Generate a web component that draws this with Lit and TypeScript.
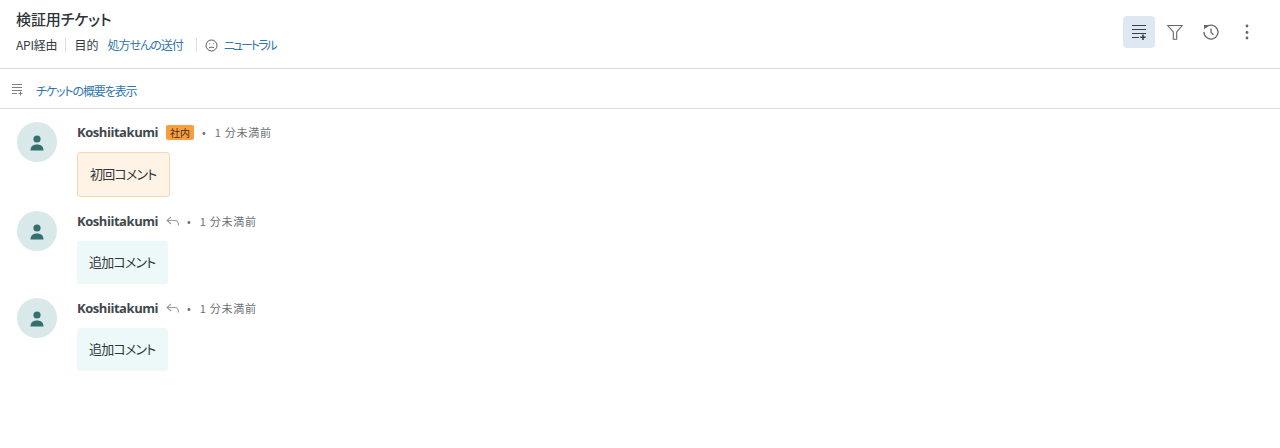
import { LitElement, html, css } from "lit";
import { customElement } from "lit/decorators.js";

const toolbarList = html`<svg width="20" height="18" viewBox="0 0 20 18" fill="none" stroke="currentColor" stroke-width="1.2"><path d="M3 2.500h14M3 6.500h14M3 10.500h14M3 14.500h7"/><path stroke-width="1.600" d="M14 11.500v5.500M11.300 14.200h5.400"/></svg>`;
const summaryList = html`<svg width="12" height="12" viewBox="0 0 12 12" fill="none" stroke="currentColor" stroke-width="1"><path d="M0 .5h10M0 3.500h10M0 6.500h10M0 9.500h5M8.500 7.500v4M6.500 9.500h4"/></svg>`;

@customElement("app-root")
export class AppRoot extends LitElement {
  static styles = css`
    :host { display: block; width: 1280px; height: 448px; background: #fff; overflow: hidden;
      font-family: "Noto Sans CJK JP", sans-serif; font-feature-settings: "palt"; color: #33393f; }
    .head { height: 69px; box-sizing: border-box; border-bottom: 1px solid #dcdcdc; padding: 10px 17px 0 16px; display: flex; justify-content: space-between; }
    .title { font-size: 15px; font-weight: 500; line-height: 18px; color: #2d3338; letter-spacing: -0.1px; }
    .meta { display: flex; align-items: center; font-size: 12px; line-height: 16px; margin-top: 9px; }
    .api { letter-spacing: -0.2px; }
    .sep { width: 1px; height: 14px; background: #dedede; margin: 0 8px; }
    .sep.wide { margin-left: 13px; }
    .link { color: #2f76ad; }
    .purpose { margin-left: 9px; letter-spacing: -1px; }
    .neutral { letter-spacing: -2px; }
    .mood { margin: 0 6px 0 0; display: block; color: #555; }
    .tools { display: flex; gap: 4px; padding-top: 6px; }
    .tool { width: 32px; height: 32px; border-radius: 4px; display: flex; align-items: center; justify-content: center; color: #62686e; }
    .tool.on { background: #dde8f3; color: #37424c; }
    .summary { height: 40px; box-sizing: border-box; border-bottom: 1px solid #dedede; padding: 14px 12px 0; display: flex; align-items: flex-start; font-size: 12px; line-height: 16px; }
    .summary svg { color: #808080; margin-right: 12px; display: block; margin-top: 1px; }
    .summary .link { letter-spacing: -1.1px; }
    .items { padding: 13px 17px 0; }
    .item { display: flex; gap: 20px; margin-bottom: 14px; }
    .avatar { width: 40px; height: 40px; border-radius: 50%; background: #d9e9e9; display: flex; align-items: center; justify-content: center; flex: none; color: #33706f; }
    .avatar svg { margin-top: 2px; }
    .line { display: flex; align-items: center; height: 20px; font-size: 11px; color: #6b7075; }
    .name { font-family: "Open Sans", sans-serif; font-weight: 700; font-size: 13px; color: #41474d; margin-right: 8px; letter-spacing: -0.45px; }
    .badge { background: #f99d3e; color: #3a3026; font-size: 10px; line-height: 15px; height: 15px; padding: 0 4px; border-radius: 2px; margin-right: 8px; }
    .dot { margin: 0 9px 0 0; }
    .reply { margin-right: 7px; color: #9a9fa3; display: block; }
    .time { letter-spacing: 0.7px; }
    .bubble { box-sizing: border-box; font-size: 13px; line-height: 20px; color: #30363b; margin-top: 10px; border-radius: 3px; white-space: nowrap; letter-spacing: -0.8px; }
    .bubble.first { width: 93px; height: 45px; padding: 11px 12px 0; background: #fef3e4; border: 1px solid #f6d9b4; }
    .bubble.next { width: 91px; height: 43px; padding: 11px 12px 0; background: #edf8f8; }
  `;

  avatar() {
    return html`<div class="avatar"><svg width="14" height="16" viewBox="0 0 14 16" fill="currentColor"><circle cx="7" cy="4" r="3.600"/><path d="M.5 15.500c0-4 2.500-6 6.500-6s6.500 2 6.500 6z"/></svg></div>`;
  }

  line(badge: boolean) {
    return html`<div class="line"><span class="name">Koshiitakumi</span>
      ${badge
        ? html`<span class="badge">社内</span>`
        : html`<svg class="reply" width="14" height="12" viewBox="0 0 14 12" fill="none" stroke="currentColor" stroke-width="1.1"><path d="M5 2 1 5.500 5 9M1 5.500h8c2.500 0 3.500 2 3.500 5"/></svg>`}
      <span class="dot">•</span><span class="time">1 分未満前</span></div>`;
  }

  render() {
    return html`
      <header class="head">
        <div>
          <div class="title">検証用チケット</div>
          <div class="meta">
            <span class="api">API経由</span><i class="sep"></i><span>目的</span>
            <span class="link purpose">処方せんの送付</span><i class="sep wide"></i>
            <svg class="mood" width="13" height="13" viewBox="0 0 13 13" fill="none" stroke="currentColor"><circle cx="6.500" cy="6.500" r="5.500"/><path d="M4 8.800c1.500-.8 3.500-.8 5 0M4.300 4.800h.8M7.900 4.800h.8"/></svg>
            <span class="link neutral">ニュートラル</span>
          </div>
        </div>
        <div class="tools">
          <div class="tool on">${toolbarList}</div>
          <div class="tool"><svg width="18" height="18" viewBox="0 0 18 18" fill="none" stroke="currentColor" stroke-width="1.1"><path d="M1.800 2.500h14.400L10.700 9v7.200H7.300V9z"/></svg></div>
          <div class="tool"><svg width="18" height="18" viewBox="0 0 18 18" fill="none" stroke="currentColor" stroke-width="1.300"><path d="M4 4.200A7 7 0 1 1 2 9M9 5.500v4l2.500 2.300"/><path fill="currentColor" stroke="none" d="M2 2h4.500L2 6.500z"/></svg></div>
          <div class="tool"><svg width="18" height="18" viewBox="0 0 18 18" fill="currentColor"><circle cx="9" cy="3" r="1.400"/><circle cx="9" cy="9.500" r="1.400"/><circle cx="9" cy="15" r="1.400"/></svg></div>
        </div>
      </header>
      <div class="summary">${summaryList}<span class="link">チケットの概要を表示</span></div>
      <div class="items">
        <div class="item">${this.avatar()}<div>${this.line(true)}<div class="bubble first">初回コメント</div></div></div>
        <div class="item">${this.avatar()}<div>${this.line(false)}<div class="bubble next">追加コメント</div></div></div>
        <div class="item">${this.avatar()}<div>${this.line(false)}<div class="bubble next">追加コメント</div></div></div>
      </div>`;
  }
}
